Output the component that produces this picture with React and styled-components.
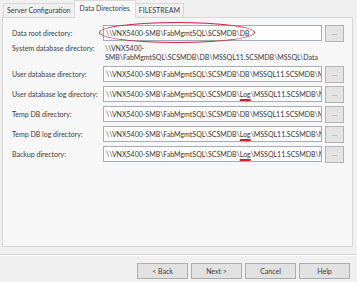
import React from 'react';
import styled, { createGlobalStyle } from 'styled-components';

const GlobalStyle = createGlobalStyle`
    html, body {
        margin: 0;
        padding: 0;
        background: #f0f0f0;
    }
    body {
        font-family: Lato, "Noto Sans", sans-serif;
        color: #3c3c3c;
    }
`;

const rows = [
    { label: 'Data root directory:', pre: '\\\\VNX5400-SMB\\FabMgmtSQL\\SCSMDB\\DB', circled: true },
    { label: 'System database directory:', lines: ['\\\\VNX5400-', 'SMB\\FabMgmtSQL\\SCSMDB\\DB\\MSSQL11.SCSMDB\\MSSQL\\Data'] },
    { label: 'User database directory:', pre: '\\\\VNX5400-SMB\\FabMgmtSQL\\SCSMDB\\DB\\MSSQL11.SCSMDB\\MSSQL\\Data' },
    { label: 'User database log directory:', pre: '\\\\VNX5400-SMB\\FabMgmtSQL\\SCSMDB\\', log: true, post: '\\MSSQL11.SCSMDB\\MSSQL\\Data' },
    { label: 'Temp DB directory:', pre: '\\\\VNX5400-SMB\\FabMgmtSQL\\SCSMDB\\DB\\MSSQL11.SCSMDB\\MSSQL\\Data' },
    { label: 'Temp DB log directory:', pre: '\\\\VNX5400-SMB\\FabMgmtSQL\\SCSMDB\\', log: true, post: '\\MSSQL11.SCSMDB\\MSSQL\\Data' },
    { label: 'Backup directory:', pre: '\\\\VNX5400-SMB\\FabMgmtSQL\\SCSMDB\\', log: true, post: '\\MSSQL11.SCSMDB\\MSSQL\\Backup' },
];

function App() {
    return (
        <Page>
            <GlobalStyle />
            <Tabs>
                <Tab>Server Configuration</Tab>
                <Tab active>Data Directories</Tab>
                <Tab>FILESTREAM</Tab>
            </Tabs>
            <Panel>
                {rows.map((r) => (
                    <Row key={r.label} text={!!r.lines}>
                        <Label text={!!r.lines}>{r.label}</Label>
                        {r.lines ? (
                            <PathText>
                                {r.lines.map((l) => <div key={l}>{l}</div>)}
                            </PathText>
                        ) : (
                            <>
                                <FieldWrap>
                                    <Field>
                                        {r.pre}
                                        {r.log && <Marked>Log</Marked>}
                                        {r.post}
                                    </Field>
                                    {r.circled && <Circle />}
                                </FieldWrap>
                                <Browse>...</Browse>
                            </>
                        )}
                    </Row>
                ))}
            </Panel>
            <Footer>
                <Button>&lt; Back</Button>
                <Button>Next &gt;</Button>
                <Button>Cancel</Button>
                <Button>Help</Button>
            </Footer>
        </Page>
    );
}

export default App;

const Page = styled.div`
    width: 357px;
    height: 282px;
    overflow: hidden;
    font-size: 7px;
`;

const Tabs = styled.div`
    display: flex;
    align-items: flex-end;
    height: 17px;
    padding-left: 3px;
    position: relative;
    z-index: 1;
`;

const Tab = styled.div`
    height: ${(p) => (p.active ? '16px' : '13px')};
    line-height: ${(p) => (p.active ? '14px' : '13px')};
    padding: 0 ${(p) => (p.active ? '5px' : '3px')};
    margin: 0 ${(p) => (p.active ? '-1px' : '0')};
    border: 1px solid #d9d9d9;
    border-bottom: ${(p) => (p.active ? '1px solid #f7f7f7' : 'none')};
    background: ${(p) => (p.active ? '#f7f7f7' : '#f0f0f0')};
    white-space: nowrap;
    position: relative;
    z-index: ${(p) => (p.active ? 2 : 1)};
    top: ${(p) => (p.active ? '1px' : '0')};
`;

const Panel = styled.div`
    margin: 0 4px 0 2px;
    height: 230px;
    border: 1px solid #d6d6d6;
    background: #f7f7f7;
    padding: 7px 0 0 9px;
    box-sizing: border-box;
    display: flex;
    flex-direction: column;
    gap: 4px;
`;

const Row = styled.div`
    display: flex;
    align-items: flex-start;
    height: ${(p) => (p.text ? '18px' : '16px')};
    margin-top: ${(p) => (p.text ? '-1px' : '0')};
`;

const Label = styled.div`
    width: 91px;
    flex: none;
    line-height: ${(p) => (p.text ? '9px' : '16px')};
    white-space: nowrap;
`;

const PathText = styled.div`
    line-height: 9px;
    padding-left: 2px;
    white-space: nowrap;
`;

const FieldWrap = styled.div`
    position: relative;
    width: 219px;
    height: 16px;
`;

const Field = styled.div`
    width: 100%;
    height: 100%;
    box-sizing: border-box;
    border: 1px solid #a3abb5;
    background: #fff;
    line-height: 14px;
    padding-left: 2px;
    white-space: nowrap;
    overflow: hidden;
    color: #333;
`;

const Marked = styled.span`
    text-decoration: underline;
    text-decoration-color: #d0202c;
    text-decoration-thickness: 1.5px;
    text-underline-offset: 2px;
`;

const Circle = styled.span`
    position: absolute;
    left: -4px;
    top: -3px;
    width: 156px;
    height: 21px;
    border: 1.5px solid #c8283c;
    border-radius: 50%;
    box-sizing: border-box;
    pointer-events: none;
`;

const Browse = styled.div`
    width: 19px;
    height: 17px;
    margin-left: 3px;
    box-sizing: border-box;
    border: 1px solid #b4b4b4;
    background: #e3e3e3;
    color: #8a8a8a;
    text-align: center;
    line-height: 12px;
    font-size: 7px;
`;

const Footer = styled.div`
    margin-top: 7px;
    border-top: 1px solid #d4d4d4;
    box-shadow: inset 0 1px 0 #ffffff;
    display: flex;
    justify-content: flex-end;
    gap: 3px;
    padding: 8px 7px 0 0;
`;

const Button = styled.div`
    width: 51px;
    height: 16px;
    box-sizing: border-box;
    border: 1px solid #adadad;
    background: #e1e1e1;
    text-align: center;
    line-height: 14px;
`;
